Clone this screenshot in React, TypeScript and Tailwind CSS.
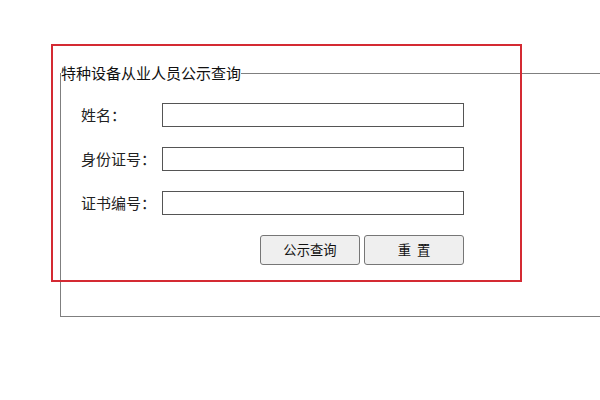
import React from 'react';

const font = { fontFamily: '"Noto Sans CJK SC", "Microsoft YaHei", sans-serif' };

const fields = [
  { label: '姓名：', name: 'name' },
  { label: '身份证号：', name: 'idcard' },
  { label: '证书编号：', name: 'certno' },
];

export default function App() {
  return (
    <div className="relative h-[400px] w-[600px] overflow-hidden bg-white" style={font}>
      <fieldset className="ml-[60px] mt-[64px] w-[600px] border border-[#7f7f7f] px-0 pb-[51px] pt-[21px]">
        <legend className="p-0 text-[15px] leading-[18px] text-[#111]">特种设备从业人员公示查询</legend>
        <div className="flex flex-col gap-5 pl-5">
          {fields.map((f) => (
            <div key={f.name} className="flex items-center">
              <label className="w-[81px] text-[15px] leading-6 text-[#222]">{f.label}</label>
              <input
                type="text"
                name={f.name}
                className="h-6 w-[302px] border border-[#555] bg-white px-1 text-[13px] outline-none"
              />
            </div>
          ))}
          <div className="flex">
            <div className="w-[81px]" />
            <div className="flex w-[302px] justify-end gap-1">
              <button className="h-[30px] w-[100px] rounded-[3px] border border-[#767676] bg-[#efefef] text-[13.33px] text-[#111]">
                公示查询
              </button>
              <button className="h-[30px] w-[100px] rounded-[3px] border border-[#767676] bg-[#efefef] text-[13.33px] text-[#111]">
                重&nbsp;&nbsp;置
              </button>
            </div>
          </div>
        </div>
      </fieldset>
      <div className="pointer-events-none absolute left-[51px] top-[44px] h-[238px] w-[471px] border-2 border-[#d42a33]" />
    </div>
  );
}
